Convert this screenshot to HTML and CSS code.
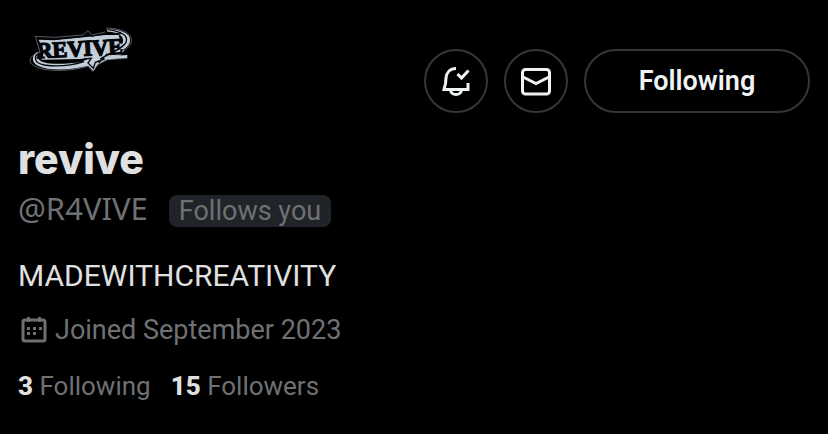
FILE: index.html
```html
<!DOCTYPE html>
<html lang="en">
<head>
    <meta charset="UTF-8">
    <meta name="viewport" content="width=device-width, initial-scale=1.0">
    <title>revive (@R4VIVE)</title>
    <link rel="stylesheet" href="styles.css">
</head>
<body>
    <main class="profile">
        <header class="profile-top">
            <a href="#" class="avatar" aria-label="revive profile photo">
                <svg viewBox="24 30 312 150" width="104" height="50" aria-hidden="true">
                    <path class="logo-light" d="M56 74 L102 76 L198 66 L256 60 L296 60 L300 74 L312 108 L300 122 L230 126 L180 132 L64 134 L72 112 Z"/>
                    <path class="logo-light" d="M58 108 C34 118 32 142 54 152 C92 170 158 164 204 152 L220 168 L234 148 L262 134 L322 128 L322 120 L262 124 L214 126 L186 140 C140 148 82 150 62 138 C48 128 50 116 58 108 Z"/>
                    <path class="logo-light" d="M262 42 C304 44 334 56 330 78 C328 98 302 110 270 122 L284 108 C308 94 314 78 306 66 C298 54 280 50 262 50 Z"/>
                    <text class="logo-text" x="50" y="130" transform="rotate(-3 50 130)">REVIVE</text>
                    <path class="logo-line" d="M46 68 L104 72 L190 64 L204 52 L214 64 L254 56 L304 56 M60 112 C38 124 42 144 72 150 C112 156 160 150 192 140 M192 132 L214 130 L204 144 L220 160 L226 142 L254 132 M264 44 C306 50 326 62 318 82 C310 98 278 112 240 132 M236 144 L262 116"/>
                    <path class="logo-edge" d="M46 64 L60 112 C32 118 22 138 38 150 C74 174 158 168 204 154 L218 170 L232 150 L260 134 L322 130 M46 64 L104 67 L188 60 L204 47 L216 60 L256 51 M258 40 C310 38 340 60 334 82 C330 94 318 104 304 110"/>
                </svg>
            </a>
            <div class="actions">
                <button type="button" class="icon-button" aria-label="Notifications">
                    <svg viewBox="0 0 32 32" width="32" height="32" aria-hidden="true">
                        <path d="M16 3.5 C10 3.5 6.5 7.5 6 13 L5.5 18.5 L4 24.5 H28 V18"/>
                        <path d="M10.5 25 C11 31 21 31 21.5 25"/>
                        <path d="M17.5 9 L21.5 13 L28.5 5.5"/>
                    </svg>
                </button>
                <button type="button" class="icon-button" aria-label="Message">
                    <svg viewBox="0 0 32 32" width="32" height="32" aria-hidden="true">
                        <rect x="2.5" y="4.5" width="27" height="24.5" rx="3"/>
                        <path d="M3 12 L16 18.5 L29 12"/>
                    </svg>
                </button>
                <button type="button" class="follow-button">Following</button>
            </div>
        </header>

        <h1>revive</h1>
        <div class="handle-row">
            <span class="handle">@R4VIVE</span>
            <span class="badge">Follows you</span>
        </div>

        <p class="bio">MADEWITHCREATIVITY</p>

        <div class="joined">
            <svg viewBox="0 0 26 26" width="26" height="26" aria-hidden="true">
                <rect class="calendar-frame" x="2" y="3" width="22" height="21" rx="2"/>
                <path class="calendar-dots" d="M6 0h3v5H6z M17 0h3v5h-3z M6 10h3v3H6z M12 10h3v3h-3z M18 10h3v3h-3z M6 15h3v3H6z M12 15h3v3h-3z"/>
            </svg>
            <span>Joined September 2023</span>
        </div>

        <nav class="stats">
            <a href="#"><strong>3</strong> Following</a>
            <a href="#"><strong>15</strong> Followers</a>
        </nav>
    </main>
</body>
</html>
```

FILE: styles.css
```css
* {
    box-sizing: border-box;
}

body {
    margin: 0;
    background-color: #000;
    color: #e0e0e0;
    font-family: Roboto, 'Liberation Sans', sans-serif;
    font-size: 27px;
    line-height: 32px;
}

.profile {
    padding: 25px 18px;
}

.profile-top {
    display: flex;
    justify-content: space-between;
    align-items: flex-start;
}

.avatar {
    display: block;
    margin-left: 10px;
}

.avatar svg {
    display: block;
}

.logo-light {
    fill: #c3cedb;
}

.logo-text {
    fill: #05070a;
    stroke: #05070a;
    stroke-width: 4;
    font-family: 'Liberation Serif', serif;
    font-size: 67px;
    font-weight: bold;
}

.logo-line,
.logo-edge {
    fill: none;
    stroke: #05070a;
    stroke-width: 4;
}

.logo-edge {
    stroke: #7e8893;
    stroke-width: 2;
}

.actions {
    display: flex;
    gap: 16px;
    margin-top: 24px;
}

.icon-button,
.follow-button {
    height: 64px;
    padding: 0;
    border: 2px solid #333639;
    border-radius: 32px;
    background-color: transparent;
    color: #eff3f4;
    cursor: pointer;
}

.icon-button {
    display: flex;
    justify-content: center;
    align-items: center;
    width: 64px;
}

.icon-button svg {
    fill: none;
    stroke: #eff3f4;
    stroke-width: 3;
}

.follow-button {
    width: 226px;
    font-family: inherit;
    font-size: 27px;
    font-weight: 600;
}

h1 {
    margin: 24px 0 11px;
    font-family: Inter, Roboto, sans-serif;
    font-size: 41px;
    font-weight: 800;
    line-height: 44px;
}

.handle-row {
    display: flex;
    align-items: baseline;
    gap: 21px;
    color: #6e7174;
}

.handle {
    font-family: 'Noto Sans', sans-serif;
    font-size: 31px;
}

.badge {
    padding: 0 10px;
    border-radius: 8px;
    background-color: #202327;
}

.bio {
    margin: 33px 0 22px;
    font-size: 30px;
}

.joined {
    display: flex;
    align-items: center;
    gap: 8px;
    padding-left: 3px;
    color: #6e7174;
}

.calendar-frame {
    fill: none;
    stroke: #6e7174;
    stroke-width: 3;
}

.calendar-dots {
    fill: #6e7174;
}

.stats {
    display: flex;
    gap: 20px;
    margin-top: 24px;
    font-size: 26px;
}

.stats a {
    color: #6e7174;
    text-decoration: none;
}

.stats strong {
    color: #e0e0e0;
    font-weight: 800;
}
```
